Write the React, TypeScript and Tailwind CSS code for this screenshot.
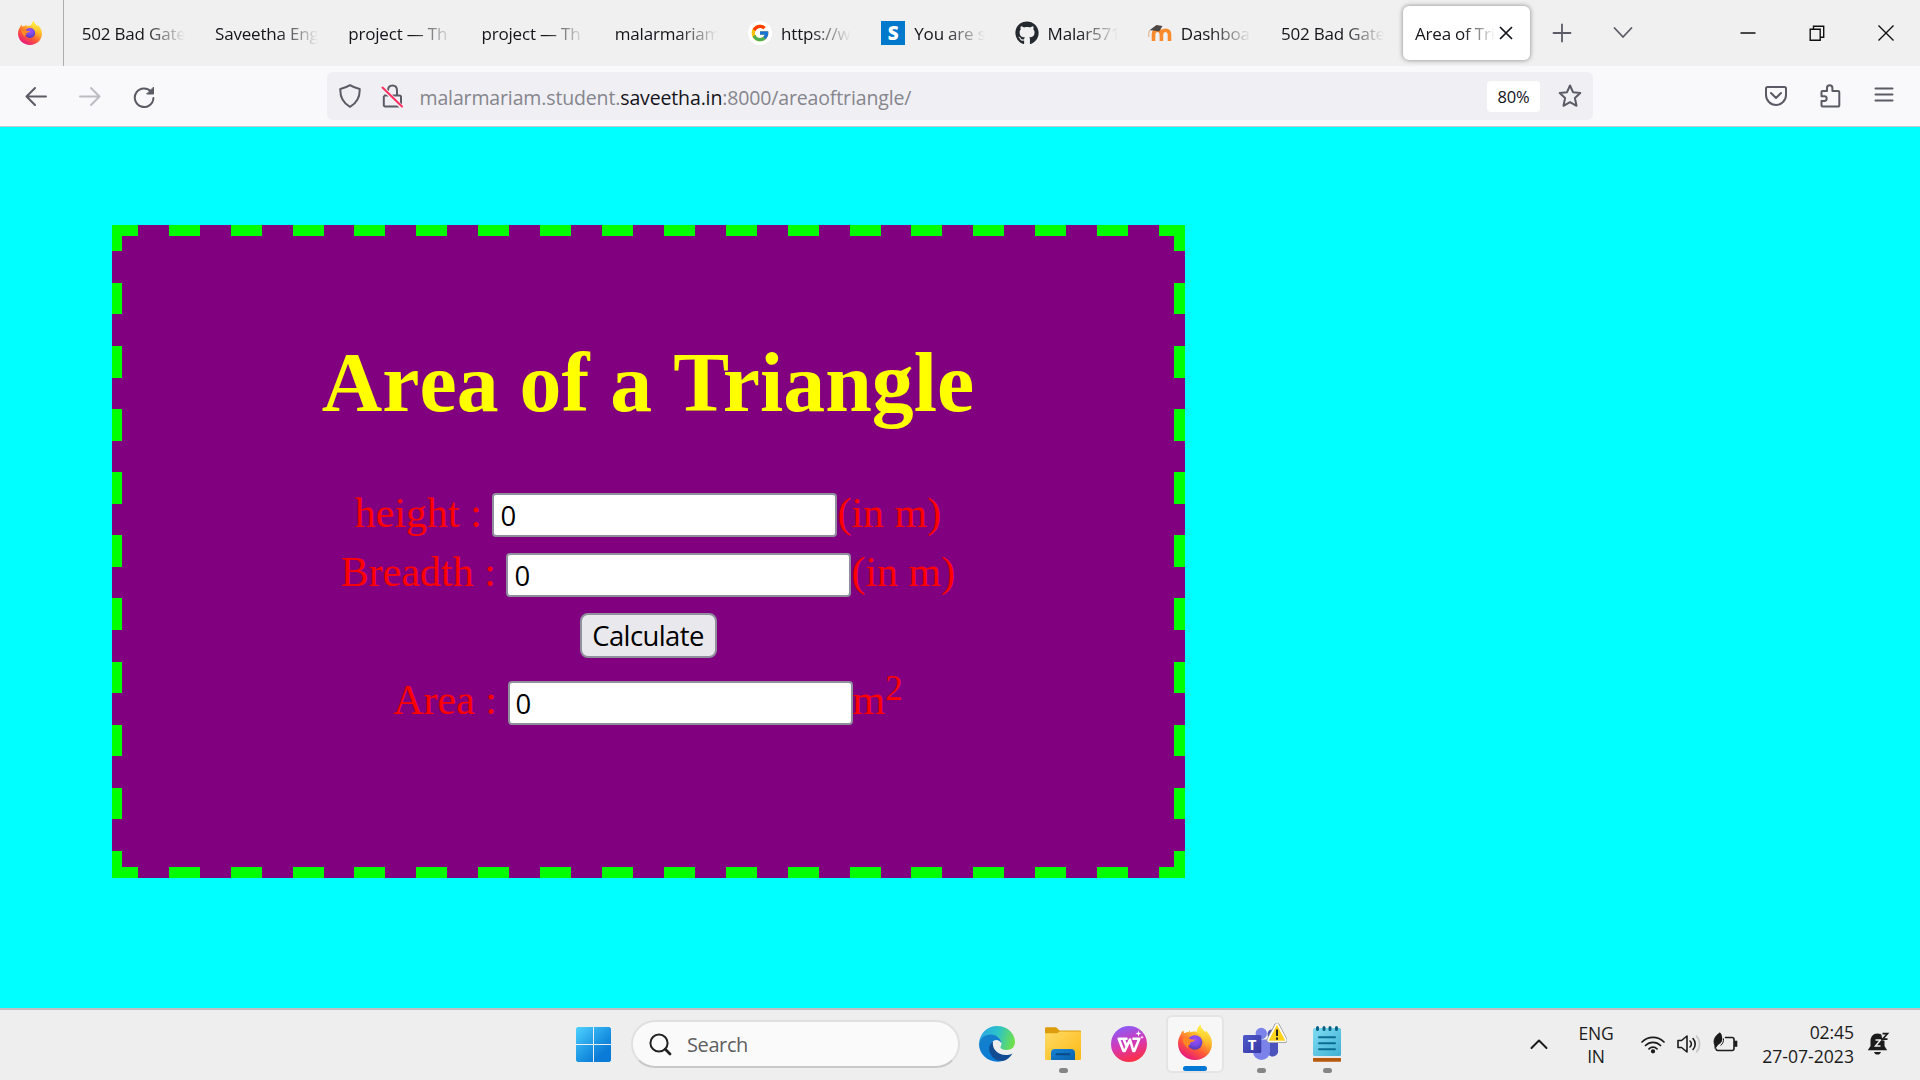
import React from "react";
import { FcGoogle } from "react-icons/fc";
import { FaGithub } from "react-icons/fa";

const UI = "font-['Open_Sans','Noto_Sans',sans-serif]";

function FirefoxLogo({ id, className }: { id: string; className: string }) {
  return (
    <svg viewBox="0 0 34 35" className={className} preserveAspectRatio="none">
      <defs>
        <linearGradient id={id + "a"} x1="0.8" y1="0.05" x2="0.25" y2="0.95">
          <stop offset="0" stopColor="#fff44f" />
          <stop offset="0.35" stopColor="#ffb229" />
          <stop offset="0.65" stopColor="#ff5a36" />
          <stop offset="1" stopColor="#e6177e" />
        </linearGradient>
        <radialGradient id={id + "b"} cx="0.5" cy="0.3" r="0.75">
          <stop offset="0" stopColor="#a04df5" />
          <stop offset="0.5" stopColor="#7a49e8" />
          <stop offset="1" stopColor="#4a37a8" />
        </radialGradient>
        <linearGradient id={id + "c"} x1="0.5" y1="0" x2="0.5" y2="1">
          <stop offset="0" stopColor="#fff14a" />
          <stop offset="0.6" stopColor="#ffc72b" />
          <stop offset="1" stopColor="#ff9a2a" stopOpacity="0.2" />
        </linearGradient>
      </defs>
      <path
        d="M2.8 9.2C3.3 7.6 4.2 6.2 5.3 5.2c.1 1.2.5 2.2 1.1 3 1.4-.9 2.8-1.3 4.2-1.3L12 5.2l.2 2.4c1.8-.9 5-1.3 6.700-.7C19 4.200 20.500 1.600 22.300 0c.5 3.500 3 5.100 5.100 7.500.3-.7.4-1.300.3-1.900 3.600 3.100 6.300 7.700 6.300 12.800C34 27.900 26.400 35 17 35S0 27.900 0 18.400C0 14.900 1.200 11.600 2.800 9.200z"
        fill={`url(#${id}a)`}
      />
      <path d="M18.900 6.900C19 4.200 20.500 1.600 22.300 0c.5 3.500 3 5.100 5.100 7.500 3.900 4.600 4.600 11.500 1.300 16.500-.6-6-4.200-10.500-9.800-17.100z" fill={`url(#${id}c)`} />
      <circle cx="17" cy="17.500" r="7.300" fill={`url(#${id}b)`} />
      <path
        d="M4.500 14.200c2.300-1.500 5-1.300 7.100-.4 1.500.7 3.500 1 5.400.8-.1 1.700-2.500 2.500-4.200 2.700-1 .2-1 1.300-.4 2.400-2.300-.2-3.200 1.400-1.700 3.800-3.200-1.600-5.500-5.200-6.200-9.300z"
        fill="#ff8a24"
      />
    </svg>
  );
}

function SiteIcon() {
  return (
    <span className="flex h-6 w-6 items-center justify-center bg-[#0078cb] font-['Open_Sans',sans-serif] text-[19px] leading-none font-extrabold text-white">
      S
    </span>
  );
}

function MoodleIcon() {
  return (
    <svg viewBox="0 0 24 24" className="h-6 w-6">
      <path d="M5.500 20V13.500c0-2.800 1.500-4.300 4-4.300s3.900 1.500 3.900 4.300V20m0-6.500c0-2.800 1.600-4.300 4-4.300s4.100 1.500 4.100 4.300V20" fill="none" stroke="#f98a2b" strokeWidth="3.600" />
      <path d="M1.500 9.300 8.500 4l6 1-3.400 5.600-5.200-1z" fill="#4b4744" />
      <path d="M1.800 9.300c-1.200 2.500-1.400 4.500-.8 6.500" stroke="#e3b48a" strokeWidth="1.200" fill="none" />
    </svg>
  );
}

const tabs: { label: string; icon?: React.ReactNode }[] = [
  { label: "502 Bad Gate" },
  { label: "Saveetha Eng" },
  { label: "project — Th" },
  { label: "project — Th" },
  { label: "malarmariam" },
  { label: "https://w", icon: <FcGoogle className="h-6 w-6 rounded-full bg-white p-[2px]" /> },
  { label: "You are s", icon: <SiteIcon /> },
  { label: "Malar571", icon: <FaGithub className="h-6 w-6 text-[#24292f]" /> },
  { label: "Dashboa", icon: <MoodleIcon /> },
  { label: "502 Bad Gate" },
];

const tabText =
  "text-[17px] leading-6 tracking-[-0.2px] whitespace-nowrap text-[#15141a] pt-[2px]";

function TabStrip() {
  return (
    <div className="flex h-[66px] items-center bg-[#f0f0f0]">
      <div className="flex h-full w-16 shrink-0 items-center border-r border-[#aeaeb0] pl-[18px]">
        <FirefoxLogo id="tab" className="h-6 w-6" />
      </div>
      <div className="flex pl-[5.800px]">
        {tabs.map((t, i) => (
          <div key={i} className="flex w-[133.250px] items-center gap-[9px] pr-[18px] pl-3">
            {t.icon && <span className="shrink-0">{t.icon}</span>}
            <span className={tabText + " min-w-0 flex-1 [mask-image:linear-gradient(to_left,transparent,black_40px)]"}>{t.label}</span>
          </div>
        ))}
      </div>
      <div className="ml-[0.700px] flex h-[54px] w-[127px] shrink-0 items-center rounded-md bg-white pl-3 shadow-[0_0_5px_rgba(0,0,0,0.45)]">
        <span className={tabText + " w-20 [mask-image:linear-gradient(to_left,transparent,black_32px)]"}>Area of Tri</span>
        <svg viewBox="0 0 16 16" className="ml-[3px] h-4 w-4" stroke="#15141a" strokeWidth="1.700">
          <path d="M2 2l12 12M14 2 2 14" />
        </svg>
      </div>
      <div className="flex items-center pl-[22px] text-[#5b5b66]">
        <svg viewBox="0 0 20 20" className="h-5 w-5" stroke="currentColor" strokeWidth="1.800" strokeLinecap="round">
          <path d="M10 1.500v17M1.500 10h17" />
        </svg>
        <svg viewBox="0 0 20 20" className="ml-[41px] h-5 w-5" fill="none" stroke="currentColor" strokeWidth="1.800" strokeLinecap="round" strokeLinejoin="round">
          <path d="M1.500 5 10 14l8.500-9" />
        </svg>
      </div>
      <div className="ml-auto flex items-center gap-[53px] pr-[26px]">
        <svg viewBox="0 0 16 16" className="h-4 w-4" stroke="#111" strokeWidth="1.500">
          <path d="M.5 8h15" />
        </svg>
        <svg viewBox="0 0 16 16" className="h-4 w-4" fill="none" stroke="#111" strokeWidth="1.400">
          <path d="M1.200 4.200h10v11h-10zM4.500 4V1.200h10.200v11H11.500" />
        </svg>
        <svg viewBox="0 0 16 16" className="h-4 w-4" stroke="#111" strokeWidth="1.400">
          <path d="M.5.5l15 15M15.500.5l-15 15" />
        </svg>
      </div>
    </div>
  );
}

function Toolbar() {
  const s = { fill: "none", stroke: "currentColor", strokeWidth: 2, strokeLinecap: "round", strokeLinejoin: "round" } as const;
  return (
    <div className="flex h-[61px] items-center border-b border-[#c8c8cc] bg-[#f9f9fb] text-[#5b5b66]">
      <div className="flex w-[327px] shrink-0 items-center pl-6">
        <svg viewBox="0 0 24 24" className="h-6 w-6" {...s}>
          <path d="M22 12.500H2.500M11 4l-8.500 8.500L11 21" />
        </svg>
        <svg viewBox="0 0 24 24" className="ml-[30px] h-6 w-6 text-[#bcbcc3]" {...s}>
          <path d="M2 12.500h19.500M13 4l8.500 8.500L13 21" />
        </svg>
        <svg viewBox="0 0 24 24" className="mt-[2px] ml-[30px] h-6 w-6" {...s}>
          <path d="M19.300 6.800A9.300 9.300 0 1 0 21.400 13" />
          <path d="M21.500 2.500v6.500H15z" fill="currentColor" strokeWidth="1" />
        </svg>
      </div>
      <div className="flex h-12 w-[1266px] shrink-0 items-center rounded-md bg-[#f0f0f4] pl-[11px]">
        <svg viewBox="0 0 24 24" className="h-6 w-6" {...s}>
          <path d="M12 1.200c3 2 6.200 3 9.700 3.700.3 8-2.600 14-9.700 17.900C4.900 18.900 2 12.900 2.300 4.900 5.800 4.200 9 3.200 12 1.200z" />
        </svg>
        <svg viewBox="0 0 24 24" className="ml-[18px] h-6 w-6" {...s}>
          <path d="M8 11V6.500C8 3.500 9.700 1.500 12.500 1.500S17 3.500 17 6.500V11M4.500 11.500h15.300a1.200 1.200 0 0 1 1.200 1.200v8.600a1.200 1.200 0 0 1-1.200 1.200H5A1.200 1.200 0 0 1 3.800 21.300v-8.600" />
          <path d="M2.500 3.500 22 23.500" stroke="#f0f0f4" strokeWidth="4" />
          <path d="M2.500 3.500 22 22.500" stroke="#ff2f62" />
        </svg>
        <span className="ml-[15.500px] pt-[3px] text-[19.500px] tracking-[-0.140px] whitespace-nowrap text-[#85858c]">
          malarmariam.student.<span className="text-[#15141a]">saveetha.in</span>:8000/areaoftriangle/
        </span>
        <span className="mr-[18px] ml-auto flex h-[31px] w-[53px] items-center justify-center rounded bg-white pt-[2px] text-[16.500px] tracking-[-0.200px] text-[#15141a]">80%</span>
        <svg viewBox="0 0 24 24" className="mr-[11px] h-6 w-6" {...s}>
          <path d="M12 1.500l3 6.700 7.300.8-5.400 5 1.600 7.800-6.500-3.600-6.500 3.600L7.100 14 1.700 9 9 8.200z" />
        </svg>
      </div>
      <div className="ml-auto flex items-center gap-[30px] pr-6">
        <svg viewBox="0 0 24 24" className="h-6 w-6" {...s}>
          <path d="M3.500 3h17a1.500 1.500 0 0 1 1.500 1.500V11a10 10 0 0 1-20 0V4.500A1.500 1.500 0 0 1 3.500 3zM7 9l5 5 5-5" />
        </svg>
        <svg viewBox="0 0 24 24" className="h-6 w-6" {...s}>
          <path d="M3.500 9V8a1 1 0 0 1 1-1H9V4a2.700 2.700 0 0 1 5.400 0v3H20a1.300 1.300 0 0 1 1.300 1.300v13A1.300 1.300 0 0 1 20 22.600H4.500a1 1 0 0 1-1-1V17h2.800a2.400 2.400 0 0 0 0-4.800H3.500V9" />
        </svg>
        <svg viewBox="0 0 24 24" className="h-6 w-6" {...s}>
          <path d="M3.500 4.500h17M3.500 10.500h17M3.500 16.500h17" />
        </svg>
      </div>
    </div>
  );
}

const dashX = "bg-[repeating-linear-gradient(90deg,#0f0_0_25.900px,#800080_25.900px_56.800px,#0f0_56.800px_61.890px)]";
const dashY = "bg-[repeating-linear-gradient(180deg,#0f0_0_15.400px,#800080_15.400px_47px,#0f0_47px_63.100px)]";
const field =
  "h-11 w-[345px] rounded-[4px] border-2 border-[#8f8f9d] bg-white px-[6px] pt-px text-[27.500px] text-black outline-none font-['Open_Sans','Noto_Sans',sans-serif]";

function Row({ label, unit, className }: { label: string; unit: React.ReactNode; className: string }) {
  return (
    <div className={"flex h-11 items-center whitespace-pre " + className}>
      <span className="pb-[5px] leading-10">{label + " : "}</span>
      <input className={field} defaultValue="0" />
      <span className="pb-[5px] leading-10">{unit}</span>
    </div>
  );
}

function Card() {
  return (
    <div className="flex h-[653px] w-[1073px] flex-col bg-[#800080]">
      <div className={"h-[11px] shrink-0 " + dashX} />
      <div className="flex flex-1">
        <div className={"w-[10px] " + dashY} />
        <div className="flex flex-1 flex-col items-center font-['Liberation_Serif',serif] text-[42px] text-[#ff0000]">
          <h1 className="mt-[99px] text-[83.800px] leading-[96px] font-bold whitespace-nowrap text-[#ffff00]">
            <span className="[font-kerning:none]">Area of a </span>
            <span>Triangle</span>
          </h1>
          <Row label="height" unit="(in m)" className="mt-[62px]" />
          <Row label="Breadth" unit="(in m)" className="mt-[15.500px]" />
          <button className="mt-4 h-[45px] w-[137px] rounded-lg border-2 border-[#8f8f9d] bg-[#e9e9ed] pt-px font-['Open_Sans','Noto_Sans',sans-serif] text-[27.500px] leading-none tracking-[-0.600px] text-black">
            Calculate
          </button>
          <Row
            label="Area"
            className="mt-[23px]"
            unit={
              <>
                m<sup className="-top-[0.390em] text-[35px] leading-none">2</sup>
              </>
            }
          />
        </div>
        <div className={"w-[11px] " + dashY} />
      </div>
      <div className={"h-[11px] shrink-0 " + dashX} />
    </div>
  );
}

function EdgeIcon() {
  return (
    <svg viewBox="0 0 36 36" className="h-9 w-9">
      <defs>
        <linearGradient id="eg1" x1="0" y1="0.3" x2="1" y2="0.5">
          <stop offset="0" stopColor="#2aa5e8" />
          <stop offset="0.5" stopColor="#2cc3c9" />
          <stop offset="1" stopColor="#6fe04b" />
        </linearGradient>
        <linearGradient id="eg2" x1="0.2" y1="0" x2="0.6" y2="1">
          <stop offset="0" stopColor="#1581c9" />
          <stop offset="1" stopColor="#0a7ad8" />
        </linearGradient>
      </defs>
      <path d="M0 17C1 7 8.500 0 18 0c10.500 0 18 7.500 18 16 0 5-3.500 8-8 8-4 0-6.500-1.200-6.500-2.800 0-1 1-1.600 1-3.700C22.500 13 18 9 11.500 9 6 9 2 12.500 0 17z" fill="url(#eg1)" />
      <path d="M0 18C.5 12.500 5.500 8.500 11.500 8.500c6 0 11 4 11 9-1-2.500-3.500-3.700-5.500-3.500-3.500.5-6 4-5.500 8.500.6 6 5.500 11.500 12.500 12.300C12 38.500 0 30 0 18z" fill="url(#eg2)" />
      <path d="M14 15.500c-4 2.500-4.800 8-2.500 12.500 2.500 5 7.500 7.500 12.500 6.900 4-1 7.500-4 9.500-7.500-6 3-13.500 1.600-17.500-3.400-2-2.500-2.500-6-2-8.500z" fill="#114c92" />
    </svg>
  );
}

function FolderIcon() {
  return (
    <svg viewBox="0 0 36 34" className="h-[34px] w-9">
      <defs>
        <linearGradient id="fo" x1="0" y1="0" x2="1" y2="1">
          <stop offset="0" stopColor="#ffdb66" />
          <stop offset="1" stopColor="#fdb813" />
        </linearGradient>
        <linearGradient id="fo2" x1="0" y1="0" x2="1" y2="1">
          <stop offset="0" stopColor="#1583d6" />
          <stop offset="1" stopColor="#0c62ab" />
        </linearGradient>
      </defs>
      <path d="M0 7V1.500A1.200 1.200 0 0 1 1.200.3h9.300a2 2 0 0 1 1.500.7l2.500 2.500H34.800A1.200 1.200 0 0 1 36 4.700V8z" fill="#dd9c0a" />
      <path d="M0 6.200h11.500a3 3 0 0 0 2-.7l1.300-1.100H34.800A1.200 1.200 0 0 1 36 5.600V32a1 1 0 0 1-1 1H1a1 1 0 0 1-1-1z" fill="url(#fo)" />
      <path d="M6 33v-7a4 4 0 0 1 4-4h16a4 4 0 0 1 4 4v7z" fill="url(#fo2)" />
      <path d="M11.500 27.300h13" stroke="#084a86" strokeWidth="2" strokeLinecap="round" />
    </svg>
  );
}

function OfficeIcon() {
  return (
    <svg viewBox="0 0 36 36" className="h-9 w-9">
      <defs>
        <linearGradient id="wp" x1="0.35" y1="0" x2="0.65" y2="1">
          <stop offset="0" stopColor="#8a5cf6" />
          <stop offset="0.5" stopColor="#d638b5" />
          <stop offset="1" stopColor="#ff2f3a" />
        </linearGradient>
      </defs>
      <circle cx="18" cy="18" r="18" fill="url(#wp)" />
      <path
        d="M15.500 12.700H7.700l4.800 12.300h1.200L19 13.500M12.800 13.500l2.400 6M19 13.500l3.300 11.500h1l5-12.300H22.500"
        fill="none"
        stroke="#fff"
        strokeWidth="2.600"
        strokeLinejoin="round"
        strokeLinecap="round"
      />
      <path d="M27.500 4.500l.8 2.200 2.200.8-2.200.8-.8 2.200-.8-2.200-2.200-.8 2.200-.8zM31 9.300l.5 1.400 1.300.5-1.300.5-.5 1.300-.5-1.300-1.300-.5 1.300-.5z" fill="#fff" />
    </svg>
  );
}

function TeamsIcon() {
  return (
    <div className="relative h-10 w-[46px]">
      <svg viewBox="0 0 46 40" className="h-10 w-[46px]">
        <defs>
          <linearGradient id="tm" x1="0" y1="0" x2="1" y2="1">
            <stop offset="0" stopColor="#5059c9" />
            <stop offset="1" stopColor="#3538a5" />
          </linearGradient>
        </defs>
        <circle cx="31" cy="12" r="4.500" fill="#4b53bc" />
        <path d="M27 16h10v12a5.500 5.500 0 0 1-10 4z" fill="#4b53bc" />
        <circle cx="20.300" cy="11.500" r="5.700" fill="#7b83eb" />
        <path d="M12 17.500h17v12a8.500 8.500 0 0 1-17 0z" fill="#7b83eb" />
        <rect x="2" y="13" width="18.300" height="18" rx="1.500" fill="url(#tm)" />
        <path d="M35 2.800 27.300 17.500a1.300 1.300 0 0 0 1.200 2h15a1.300 1.300 0 0 0 1.200-2L37 2.800a1.100 1.100 0 0 0-2 0z" fill="#ffd21c" stroke="#8e8e8e" strokeWidth="3" />
        <path d="M35 2.800 27.300 17.500a1.300 1.300 0 0 0 1.200 2h15a1.300 1.300 0 0 0 1.200-2L37 2.800a1.100 1.100 0 0 0-2 0z" fill="#ffd21c" stroke="#fff" strokeWidth="1.700" />
        <path d="M36 7.500v6.500M36 15.500v2.200" stroke="#222" strokeWidth="2" />
      </svg>
      <span className="absolute top-[13px] left-[2px] w-[18px] text-center text-[15px] leading-[18px] font-bold text-white">T</span>
    </div>
  );
}

function NotepadIcon() {
  return (
    <svg viewBox="0 0 28 36" className="h-9 w-7">
      <defs>
        <linearGradient id="np" x1="0" y1="0" x2="1" y2="1">
          <stop offset="0" stopColor="#7fdcf3" />
          <stop offset="1" stopColor="#3fb0d3" />
        </linearGradient>
      </defs>
      <rect y="31.500" width="28" height="4.300" rx=".8" fill="#b5590f" />
      <path d="M0 28h28v4H0z" fill="#e9e9e9" />
      <rect y="2" width="28" height="28" rx="1.500" fill="url(#np)" />
      <path d="M4.500 1.500v2M11 1.500v2M17 1.500v2M23.500 1.500v2" stroke="#0b6185" strokeWidth="3" strokeLinecap="round" />
      <path d="M6 11.300h16M6 17.200h16M6 23.200h16" stroke="#0b6c92" strokeWidth="2" strokeLinecap="round" />
    </svg>
  );
}

function PinnedApp({ children, open }: { children: React.ReactNode; open?: boolean }) {
  return (
    <div className="flex h-[58px] w-[66px] flex-col items-center">
      <div className="flex h-[53px] items-center pt-[5px]">{children}</div>
      {open && <div className="h-[5px] w-[9px] rounded-full bg-[#858585]" />}
    </div>
  );
}

function Taskbar() {
  return (
    <div className="flex h-[72px] items-start border-t-2 border-[#bfbfc3] bg-[#eeeeee] pt-[5px]">
      <svg viewBox="0 0 35 35" className="mt-3 ml-[576px] h-[35px] w-[35px] shrink-0">
        <defs>
          <linearGradient id="win" gradientUnits="userSpaceOnUse" x1="0" y1="0" x2="32" y2="35">
            <stop offset="0" stopColor="#4fd2ff" />
            <stop offset="0.5" stopColor="#1f9ae6" />
            <stop offset="0.800" stopColor="#0a7bd6" />
          </linearGradient>
        </defs>
        <path d="M1.500 0H17v17H0V1.500zM18 0h15.500L35 1.500V17H18zM0 18h17v17H1.500L0 33.500zM18 18h17v15.500L33.500 35H18z" fill="url(#win)" />
      </svg>
      <div className="mt-[5px] ml-5 flex h-12 w-[329px] shrink-0 items-center rounded-full border-2 border-[#e0e0e0] border-b-[#c8c8c8] bg-[#fafafa] pl-4">
        <svg viewBox="0 0 23 23" className="h-[23px] w-[23px]" fill="none" stroke="#222" strokeLinecap="round">
          <circle cx="10" cy="10" r="8.600" strokeWidth="2" />
          <path d="M16.300 16.300l4.700 4.700" strokeWidth="2.800" />
        </svg>
        <span className="ml-[15px] pt-[2px] text-[20px] tracking-[-0.400px] text-[#5f5f5f]">Search</span>
      </div>
      <div className="ml-[4px] flex">
        <PinnedApp><EdgeIcon /></PinnedApp>
        <PinnedApp open><FolderIcon /></PinnedApp>
        <PinnedApp><OfficeIcon /></PinnedApp>
        <div className="mx-1 flex h-[58px] w-[58px] flex-col items-center rounded-md border-2 border-[#e4e4e4] bg-[#f7f7f7]">
          <div className="flex h-[51px] items-center pt-[2px]"><FirefoxLogo id="task" className="h-[35px] w-[34px]" /></div>
          <div className="h-[5px] w-6 shrink-0 rounded-full bg-[#0078d4]" />
        </div>
        <PinnedApp open><div className="pb-1 pl-[6px]"><TeamsIcon /></div></PinnedApp>
        <PinnedApp open><NotepadIcon /></PinnedApp>
      </div>
      <div className="ml-auto flex h-[58px] items-center pr-[30px] text-[#1b1b1b]">
        <svg viewBox="0 0 18 12" className="h-3 w-[18px]" fill="none" stroke="currentColor" strokeWidth="2" strokeLinecap="round" strokeLinejoin="round">
          <path d="M1.500 10 9 2.500l7.500 7.500" />
        </svg>
        <div className="ml-[24px] w-12 pt-px text-center text-[17.500px] leading-[23px] tracking-[-0.200px]">
          ENG
          <br />
          IN
        </div>
        <svg viewBox="0 0 24 20" className="ml-[21px] h-5 w-6" fill="none" stroke="currentColor" strokeWidth="1.700" strokeLinecap="round">
          <path d="M1 8a15.500 15.500 0 0 1 22 0M4.500 11.500a10.600 10.600 0 0 1 15 0M8 14.800a5.800 5.800 0 0 1 8 0" />
          <circle cx="12" cy="17.300" r="1.300" fill="currentColor" />
        </svg>
        <svg viewBox="0 0 24 22" className="ml-3 h-[22px] w-6" fill="none" stroke="currentColor" strokeWidth="1.600" strokeLinecap="round" strokeLinejoin="round">
          <path d="M1 7.500h3.500L10 3v16l-5.500-4.500H1zM13 8a4 4 0 0 1 0 6M16 5.500a8 8 0 0 1 0 11" />
          <path d="M19.500 3a12 12 0 0 1 0 16" stroke="#c4c4c4" />
        </svg>
        <svg viewBox="0 0 25 22" className="mb-[2px] ml-3 h-[22px] w-[25px]" fill="none" stroke="currentColor" strokeWidth="1.600">
          <path d="M12.500 5.500H19a2 2 0 0 1 2 2v9a2 2 0 0 1-2 2H5a2 2 0 0 1-2-1.500" strokeLinecap="round" />
          <path d="M22 9.500h1.500v4.500H22z" fill="currentColor" />
          <path d="M1.800 13.500C-.5 8 2.500 3.500 7 .8c3 4 3.500 9.500-1.800 11.500L2 16.500z" fill="currentColor" strokeWidth=".8" />
          <path d="M9.300 3.500c1.200 4 .5 7.500-3 9.500" stroke="#eee" strokeWidth="1" />
          <path d="M10.500 6.500c.3 3-.8 5.500-3 7" strokeWidth="1" />
        </svg>
        <div className="ml-[22px] w-[94px] text-right text-[17.600px] leading-6">
          <span className="tracking-[-0.100px]">02:45</span>
          <br />
          <span>27-07-2023</span>
        </div>
        <svg viewBox="0 0 23 24" className="ml-[13px] h-6 w-[23px]">
          <path d="M10.500 1.500C6 1.500 3.500 5 3.500 9v5L.8 18.300h19.400L17.500 14V9c0-4-2.500-7.500-7-7.500zM7 20h7c-.5 1.700-1.800 2.600-3.500 2.600S7.500 21.700 7 20z" fill="#1b1b1b" />
          <path d="M8.500 8h5l-5 6h5" fill="none" stroke="#eee" strokeWidth="1.500" />
          <path d="M14 0h8v8.500h-6.500z" fill="#eee" />
          <path d="M15.500 1.700h5l-5 5.500h5" fill="none" stroke="#1b1b1b" strokeWidth="1.700" />
        </svg>
      </div>
    </div>
  );
}

export default function App() {
  return (
    <div className={"flex h-[1080px] w-[1920px] flex-col overflow-hidden " + UI}>
      <TabStrip />
      <Toolbar />
      <main className="flex-1 bg-[#00ffff] pt-[98px] pl-[112px]">
        <Card />
      </main>
      <Taskbar />
    </div>
  );
}
